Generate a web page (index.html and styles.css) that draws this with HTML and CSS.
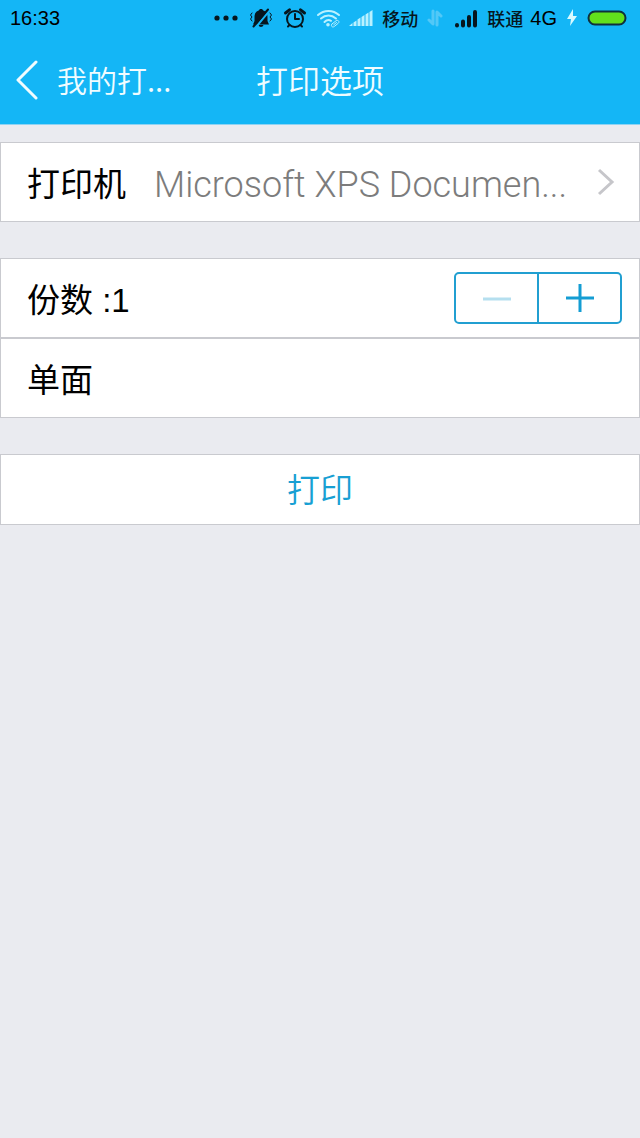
FILE: index.html
```html
<!DOCTYPE html>
<html lang="zh-CN">
<head>
<meta charset="utf-8">
<meta name="viewport" content="width=device-width, initial-scale=1">
<title>打印选项</title>
<link rel="stylesheet" href="styles.css">
</head>
<body>
<header class="top">
  <div class="status">
    <time class="clock">16:33</time>
    <div class="indicators">
      <svg class="dots" width="26" height="24" viewBox="0 0 26 24" aria-hidden="true"><circle cx="4" cy="12" r="2.600"/><circle cx="13" cy="12" r="2.600"/><circle cx="22" cy="12" r="2.600"/></svg>
      <svg class="bell" width="24" height="24" viewBox="0 0 24 24" aria-hidden="true"><path d="M12 3c1.200 0 2 .6 2.300 1.500C17.500 5.500 18.500 8 18.500 11v4l1.500 3.500H4L5.500 15v-4c0-3 1-5.500 4.200-6.500C10 3.600 10.800 3 12 3zM9.500 19h5c-.5 2.500-4.500 2.500-5 0z"/><path class="cut" d="M20.500 4.500L7 21"/><path class="slash" d="M19 3.500L4.500 20.500"/><path class="shake" d="M3 7L1.500 9 3 11 1.500 13 3 15M21 7l1.500 2L21 11l1.500 2L21 15"/></svg>
      <svg class="alarm" width="24" height="24" viewBox="0 0 24 24" aria-hidden="true"><circle cx="12" cy="13" r="8"/><path d="M12 8v5h4M6.500 19L5 20.500M17.500 19l1.500 1.500"/><path class="ears" d="M2.500 7L6.500 3.800M21.500 7L17.500 3.800"/></svg>
      <svg class="wifi" width="26" height="24" viewBox="0 0 26 24" aria-hidden="true"><path d="M2 9c6-5.500 15-5.500 21 0M5 12.500c4.500-4 10.500-4 15 0M8.500 16c2-2 4.500-2.300 6.500-1.200"/><circle cx="12" cy="18.800" r="1.800"/><path class="link" d="M16 18l4-3.200c2-1.500 4 1 2.200 2.500l-4 3.200c-2 1.500-4-1-2.200-2.500zM17.800 18.700l2.700-2.200"/></svg>
      <svg class="signal" width="24" height="24" viewBox="0 0 24 24" aria-hidden="true"><path d="M0 20l3.500-3v3zM4.500 16.500l3-2V20h-3zM8.500 13.500l3-2V20h-3zM12.500 11l3-2v11h-3zM16.500 8.500l3-2V20h-3zM20.500 6l3-2v16h-3z"/></svg>
      <span class="carrier">移动</span>
      <svg class="transfer" width="16" height="24" viewBox="0 0 16 24" aria-hidden="true"><path d="M6 5v13l-4-4M10 19V6l4 4"/></svg>
      <svg class="bars" width="24" height="24" viewBox="0 0 24 24" aria-hidden="true"><path d="M2 19v.5M8 15.500v4M14 11v8.500M20 6v13.500"/></svg>
      <span class="carrier carrier-main">联通</span>
      <span class="network">4G</span>
      <svg class="bolt" width="12" height="24" viewBox="0 0 12 24" aria-hidden="true"><path d="M7 3L1 13h4L4 20l7-10H7z"/></svg>
      <svg class="battery" width="40" height="24" viewBox="0 0 40 24" aria-hidden="true"><rect x="1.500" y="5.500" width="37" height="13" rx="6.500"/></svg>
    </div>
  </div>
  <nav class="nav">
    <a class="back" href="#">
      <svg width="26" height="42" viewBox="0 0 26 42" aria-hidden="true"><path d="M22 4L4 22l18 18"/></svg>
      <span>我的打...</span>
    </a>
    <h1 class="title">打印选项</h1>
  </nav>
</header>
<main class="content">
  <section class="group">
    <a class="row" href="#">
      <span class="label">打印机</span>
      <span class="printer">Microsoft XPS Documen...</span>
      <svg class="chevron" width="18" height="28" viewBox="0 0 18 28" aria-hidden="true"><path d="M2 2l13 12L2 26"/></svg>
    </a>
  </section>
  <section class="group">
    <div class="row">
      <span class="label">份数 :<output>1</output></span>
      <div class="stepper" role="group" aria-label="份数">
        <button class="step" type="button" disabled aria-label="减少"><svg width="32" height="32" viewBox="0 0 32 32" aria-hidden="true"><path d="M2 17h28"/></svg></button>
        <button class="step" type="button" aria-label="增加"><svg width="32" height="32" viewBox="0 0 32 32" aria-hidden="true"><path d="M2 16h28M16 2v28"/></svg></button>
      </div>
    </div>
    <div class="row">
      <span class="label">单面</span>
    </div>
  </section>
  <button class="print" type="button">打印</button>
</main>
</body>
</html>
```
FILE: styles.css
```css
* {
  box-sizing: border-box;
}

body {
  margin: 0;
  min-height: 100vh;
  background: #eaebf0;
  color: #000;
  font-family: Roboto, "Noto Sans CJK SC", sans-serif;
}

a {
  color: inherit;
  text-decoration: none;
}

svg {
  display: block;
  flex: none;
  fill: none;
  stroke-linecap: round;
  stroke-linejoin: round;
}

.top {
  background: #14b6f6;
  border-bottom: 1px solid #8fd3f3;
}

.status {
  display: flex;
  align-items: center;
  justify-content: space-between;
  height: 36px;
  padding: 0 13px 0 10px;
  color: #06161e;
  font-size: 18px;
  line-height: 24px;
}

.clock,
.network {
  color: #000;
  font-family: "Liberation Sans", sans-serif;
  font-size: 20px;
}

.indicators {
  display: flex;
  align-items: center;
}

.dots {
  fill: #06161e;
  margin-right: 10px;
}

.bell {
  fill: #06161e;
  margin-right: 10px;
}

.bell .cut {
  stroke: #14b6f6;
  stroke-width: 2;
}

.bell .slash {
  stroke: #06161e;
  stroke-width: 2;
}

.bell .shake {
  fill: none;
  stroke: #06161e;
  stroke-width: 1;
}

.alarm {
  stroke: #06161e;
  stroke-width: 2;
  margin-right: 9px;
}

.alarm .ears {
  stroke-width: 3;
}

.wifi {
  stroke: #b9f1ff;
  stroke-width: 2;
  margin-right: 7px;
}

.wifi circle {
  fill: #b9f1ff;
  stroke: none;
}

.wifi .link {
  stroke-width: 1;
}

.signal {
  fill: #b9f1ff;
  margin-right: 9px;
}

.carrier {
  font-weight: 500;
  font-family: "Noto Sans CJK SC", sans-serif;
}

.transfer {
  stroke: #52c8f7;
  stroke-width: 3;
  margin: 0 12px 0 9px;
}

.bars {
  stroke: #06161e;
  stroke-width: 4;
  margin-right: 8px;
}

.carrier-main {
  margin-right: 7px;
}

.bolt {
  fill: #d8faff;
  margin: 0 9px;
}

.battery {
  fill: #62e01c;
  stroke: #10303c;
  stroke-width: 2;
}

.nav {
  display: grid;
  grid-template-columns: 1fr auto 1fr;
  align-items: center;
  height: 88px;
  padding: 0 14px 2px;
  color: #f0fcff;
}

.back {
  display: flex;
  align-items: center;
  gap: 17px;
  font-size: 30px;
  line-height: 40px;
  font-weight: 350;
  font-family: "Noto Sans CJK SC", sans-serif;
}

.back svg {
  stroke: #f0fcff;
  stroke-width: 3;
}

.title {
  margin: 0;
  font-size: 32px;
  line-height: 40px;
  font-weight: 350;
  font-family: "Noto Sans CJK SC", sans-serif;
}

.content {
  display: flex;
  flex-direction: column;
  gap: 36px;
  padding-top: 17px;
}

.row {
  display: flex;
  align-items: center;
  height: 80px;
  padding: 0 17px 0 26px;
  background: #fff;
  border: 1px solid #c9cacf;
}

.label {
  padding-top: 5px;
  font-family: "Liberation Sans", "Noto Sans CJK SC", sans-serif;
  font-size: 33px;
  line-height: 48px;
}

.printer {
  flex: 1;
  margin-left: 28px;
  padding-top: 5px;
  color: #7c7c7c;
  font-size: 36px;
  font-weight: 300;
  line-height: 48px;
  white-space: nowrap;
}

.chevron {
  margin-right: 7px;
  stroke: #c6c6ca;
  stroke-width: 3;
  stroke-linecap: butt;
  stroke-linejoin: miter;
}

.stepper {
  display: flex;
  width: 168px;
  height: 52px;
  margin-left: auto;
  border: 2px solid #219fd1;
  border-radius: 5px;
}

.step {
  display: flex;
  flex: 1;
  align-items: center;
  justify-content: center;
  padding: 0;
  border: 0;
  background: none;
}

.step + .step {
  border-left: 2px solid #219fd1;
}

.step svg {
  stroke: #149dd3;
  stroke-width: 3;
  stroke-linecap: butt;
}

.step:disabled svg {
  stroke: #b5dfef;
}

.print {
  width: 100%;
  height: 71px;
  padding: 0 0 4px;
  border: 1px solid #c9cacf;
  background: #fff;
  color: #189fd3;
  font-family: "Noto Sans CJK SC", sans-serif;
  font-size: 33px;
  font-weight: 350;
  line-height: 48px;
}
```
